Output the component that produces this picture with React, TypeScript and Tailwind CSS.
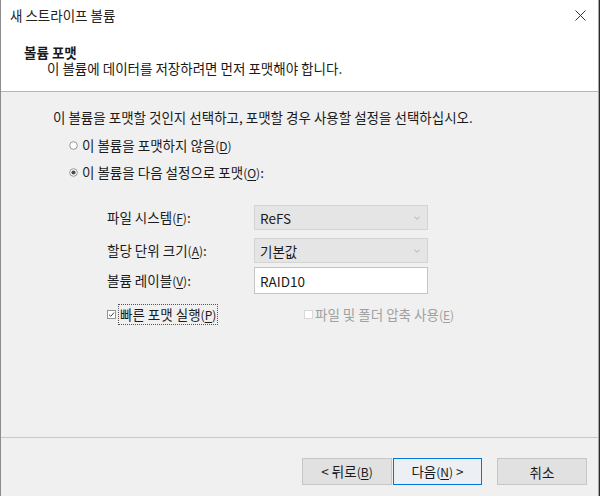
import React from 'react';

const font = { fontFamily: '"Noto Sans CJK KR", "Noto Sans", sans-serif' };

function Key({ k }: { k: string }) {
  return (
    <span className="text-[12px]">
      (<span className="underline underline-offset-2">{k}</span>)
    </span>
  );
}

function Radio({ checked }: { checked?: boolean }) {
  return (
    <svg width="9" height="9" viewBox="0 0 9 9" className="shrink-0">
      <circle cx="4.5" cy="4.5" r="3.8" fill="#fff" stroke="#8a8a8a" strokeWidth="0.9" />
      {checked ? <circle cx="4.5" cy="4.5" r="2.1" fill="#4a4a4a" /> : null}
    </svg>
  );
}

function Check({ checked, disabled }: { checked?: boolean; disabled?: boolean }) {
  return (
    <svg width="9" height="9" viewBox="0 0 9 9" className="shrink-0">
      <rect
        x="0.5"
        y="0.5"
        width="8"
        height="8"
        fill="#fff"
        stroke={disabled ? '#d6d6d6' : '#8a8a8a'}
        strokeWidth="0.9"
      />
      {checked ? (
        <path d="M2 4.6 L3.8 6.3 L7 2.6" fill="none" stroke="#4a4a4a" strokeWidth="1" />
      ) : null}
    </svg>
  );
}

function Select({ value }: { value: string }) {
  return (
    <div className="flex h-[25px] w-[174px] items-center justify-between border border-[#d4d4d4] bg-[#e5e5e5] pl-[5px] pr-[7px]">
      <span>{value}</span>
      <svg width="6" height="4" viewBox="0 0 6 4">
        <path d="M0.5 0.8 L3 3.2 L5.5 0.8" fill="none" stroke="#a8a8a8" strokeWidth="0.9" />
      </svg>
    </div>
  );
}

export default function App() {
  return (
    <div
      className="flex h-[496px] w-[600px] overflow-hidden text-[13.5px] leading-[16px] text-[#1a1a1a]"
      style={font}
    >
      <div className="w-px bg-[#8c8c8c]" />
      <div className="flex w-[597px] flex-col">
        {/* title bar */}
        <div className="flex h-[30px] items-center justify-between bg-white pl-[9px] pr-[12px]">
          <span className="text-[#222]">새 스트라이프 볼륨</span>
          <svg width="11" height="11" viewBox="0 0 11 11">
            <path d="M0.5 0.5 L10.5 10.5 M10.5 0.5 L0.5 10.5" stroke="#333" strokeWidth="1" />
          </svg>
        </div>

        {/* header */}
        <div className="flex h-[61px] flex-col bg-white pl-[23px] pt-[14px]">
          <span className="font-bold">볼륨 포맷</span>
          <span className="pl-[23px]">이 볼륨에 데이터를 저장하려면 먼저 포맷해야 합니다.</span>
        </div>
        <div className="h-px bg-[#b4b4b4]" />

        {/* body */}
        <div className="flex h-[345px] flex-col bg-[#f0f0f0] pl-[52px] pt-[17px]">
          <p>이 볼륨을 포맷할 것인지 선택하고, 포맷할 경우 사용할 설정을 선택하십시오.</p>

          <div className="mt-[12px] flex items-center gap-[4px] pl-[16px]">
            <Radio />
            <span>
              이 볼륨을 포맷하지 않음<Key k="D" />
            </span>
          </div>
          <div className="mt-[10px] flex items-center gap-[4px] pl-[16px]">
            <Radio checked />
            <span>
              이 볼륨을 다음 설정으로 포맷<Key k="O" />:
            </span>
          </div>

          <div className="mt-[24px] flex flex-col pl-[54px]">
            <div className="flex items-center">
              <span className="w-[147px]">
                파일 시스템<Key k="F" />:
              </span>
              <Select value="ReFS" />
            </div>
            <div className="mt-[8px] flex items-center">
              <span className="w-[147px]">
                할당 단위 크기<Key k="A" />:
              </span>
              <Select value="기본값" />
            </div>
            <div className="mt-[4px] flex items-center">
              <span className="w-[147px]">
                볼륨 레이블<Key k="V" />:
              </span>
              <div className="flex h-[27px] w-[174px] items-center border border-[#c4c4c4] bg-white pl-[5px]">
                RAID10
              </div>
            </div>

            <div className="mt-[10px] flex items-center">
              <div className="flex w-[197px] items-center gap-[2px]">
                <Check checked />
                <span className="border border-dotted border-[#555] px-px leading-[18px]">
                  빠른 포맷 실행<Key k="P" />
                </span>
              </div>
              <div className="flex items-center gap-[2px] text-[#a0a0a0]">
                <Check disabled />
                <span>
                  파일 및 폴더 압축 사용<Key k="E" />
                </span>
              </div>
            </div>
          </div>
        </div>

        {/* footer */}
        <div className="h-px bg-[#c8c8c8]" />
        <div className="flex flex-1 items-start bg-[#f0f0f0] pl-[301px] pt-[20px]">
          <button className="h-[27px] w-[90px] border border-[#c6c6c6] bg-[#e1e1e1]">
            &lt; 뒤로<Key k="B" />
          </button>
          <button className="ml-[1px] h-[27px] w-[89px] border border-[#0078d7] bg-[#e5f1fb]/40">
            다음<Key k="N" /> &gt;
          </button>
          <button className="ml-[15px] h-[27px] w-[90px] border border-[#c6c6c6] bg-[#e1e1e1]">
            취소
          </button>
        </div>
      </div>
      <div className="w-px bg-[#a8a8a8]" />
      <div className="w-px bg-[#2b2b2b]" />
    </div>
  );
}
